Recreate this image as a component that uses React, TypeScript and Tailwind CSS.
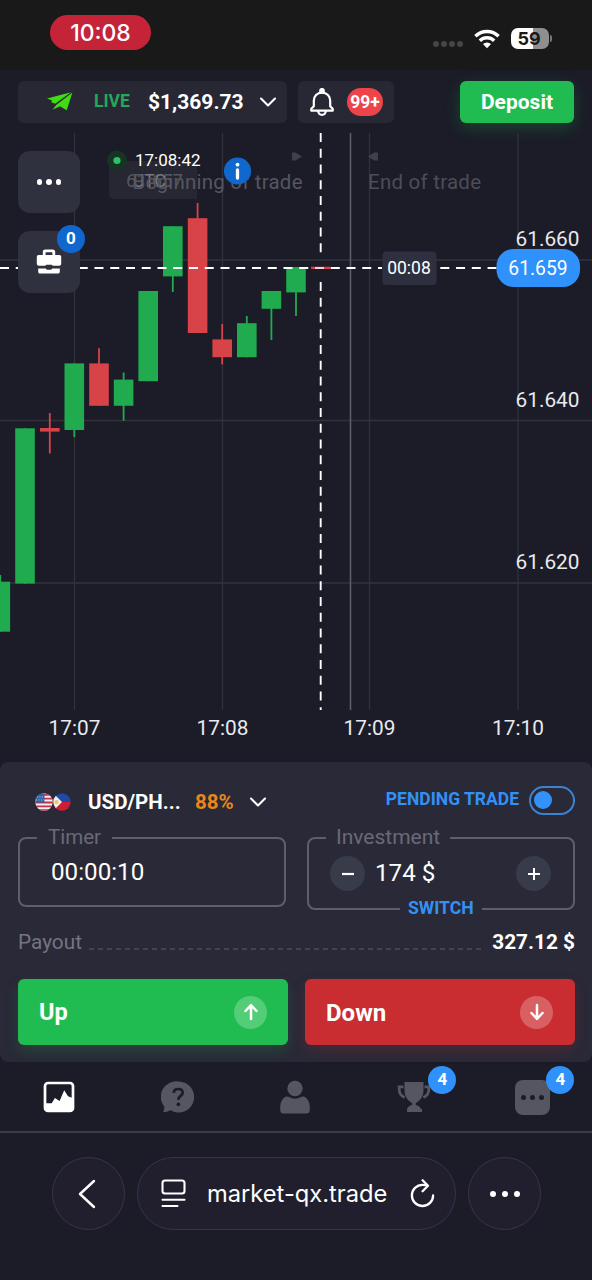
import React, { useState } from 'react';

type Candle = { x: number; top: number; bottom: number; high?: number; low?: number; up: boolean };

// x is the centre of the candle, all values are in page coordinates
const CANDLES: Candle[] = [
    { x: 0.3, top: 581.7, bottom: 631.7, high: 575, up: true },
    { x: 25, top: 428.3, bottom: 583.6, up: true },
    { x: 49.8, top: 428, bottom: 431.6, high: 413, low: 453.5, up: false },
    { x: 74.3, top: 363.4, bottom: 430, low: 437, up: true },
    { x: 99, top: 363.4, bottom: 405.8, high: 348.2, up: false },
    { x: 123.6, top: 379.6, bottom: 405.8, high: 372.5, low: 420.7, up: true },
    { x: 148.2, top: 291, bottom: 381.2, up: true },
    { x: 172.8, top: 226.2, bottom: 276.4, low: 292, up: true },
    { x: 197.6, top: 218.2, bottom: 333, high: 203, up: false },
    { x: 222.2, top: 339.4, bottom: 357.2, high: 324, low: 364.4, up: false },
    { x: 246.8, top: 323.2, bottom: 357.2, high: 316, up: true },
    { x: 271.4, top: 291, bottom: 308.8, low: 340, up: true },
    { x: 296, top: 267, bottom: 292.4, low: 316, up: true },
    { x: 321, top: 267, bottom: 269, up: false },
];

const GRID_X = [74.5, 222.5, 369.5, 518];
const GRID_Y = [260, 420.5, 583];

const TIMES = [
    { x: 74.5, label: '17:07' },
    { x: 222.5, label: '17:08' },
    { x: 369.5, label: '17:09' },
    { x: 518, label: '17:10' },
];

const PRICES = [
    { y: 246, label: '61.660' },
    { y: 406.5, label: '61.640' },
    { y: 569, label: '61.620' },
];

const Chevron: React.FC = () => (
    <svg width="18" height="12" viewBox="0 0 18 12" fill="none" stroke="#fff" strokeWidth="2.1" strokeLinecap="round" strokeLinejoin="round">
        <path d="M2 2.5l7 7 7-7" />
    </svg>
);

const StatusBar: React.FC = () => (
    <div className="flex h-[70px] items-start justify-between bg-[#191919] pl-[50px] pr-[40px]">
        <div className="mt-[15px] flex h-[35px] w-[101px] items-center justify-center rounded-full bg-[#c42338] pt-[2px] font-[Inter] text-[23px] font-medium text-white">
            10:08
        </div>
        <div className="mt-[27px] flex h-[22px] items-center">
            <div className="mt-3 flex gap-[2px]">
                <span className="size-[6px] rounded-full bg-[#454545]" />
                <span className="size-[6px] rounded-full bg-[#454545]" />
                <span className="size-[6px] rounded-full bg-[#454545]" />
                <span className="size-[6px] rounded-full bg-[#454545]" />
            </div>
            <svg className="ml-[11px] mt-[1px]" width="26" height="20" viewBox="0 0 26 20" fill="none" stroke="#fff" strokeWidth="3.4">
                <path d="M1.4 7.2a16.6 16.6 0 0 1 23.2 0" />
                <path d="M5.8 11.7a10.3 10.3 0 0 1 14.4 0" />
                <path d="M13 19.2l-4-4.1a5.7 5.7 0 0 1 8 0z" fill="#fff" stroke="none" />
            </svg>
            <div className="ml-[11px] flex h-[21px] w-[38px] items-center justify-center rounded-[7px] bg-[linear-gradient(90deg,#fff_58%,#8f8f8f_58%)] pr-[2px] pt-[1px] font-[Inter] text-[18px] font-bold text-[#191919]">
                59
            </div>
            <span className="ml-[1px] h-[7px] w-[2px] rounded-r-full bg-[#777]" />
        </div>
    </div>
);

const Header: React.FC = () => (
    <div className="flex h-[63px] items-start pl-[18px] pr-[18px] pt-[11px]">
        <div className="flex h-[42px] w-[269px] items-center rounded-md bg-[#272834] pl-[29px]">
            <svg className="mb-[2px]" width="26" height="19" viewBox="0 0 26 19" fill="#3fdc12">
                <path d="M0 6.4L24 .2 8.200 11.800 4.200 10.200 5 8.500z" />
                <path d="M25.400.400L19.700 18.300 13 14.200 5.600 17.800 9.200 12.900z" />
            </svg>
            <span className="mb-[2px] ml-[21px] w-[54px] whitespace-nowrap text-[17.5px] font-bold text-[#24a85a]">LIVE</span>
            <span className="mt-[2px] w-[111px] whitespace-nowrap text-[21px] font-bold text-white">$1,369.73</span>
            <Chevron />
        </div>
        <div className="ml-[11px] flex h-[42px] w-[96px] items-center rounded-md bg-[#272834] pl-3">
            <svg width="24" height="29" viewBox="0 0 24 29" fill="none" stroke="#fff" strokeWidth="2.2" strokeLinejoin="round">
                <circle cx="12" cy="2.8" r="1.8" fill="#fff" />
                <path d="M12 4.6c-5 0-8.2 3.6-8.2 8.2v5.4L1.3 20.8v1.9h21.4v-1.9l-2.5-2.6v-5.4c0-4.6-3.2-8.2-8.2-8.2z" />
                <path d="M8 22.9c.5 2.6 1.8 4 4 4s3.500-1.400 4-4" />
            </svg>
            <span className="ml-[13px] flex h-7 w-[36px] items-center justify-center rounded-full bg-[#ec4448] text-[17.5px] font-bold text-white">
                99+
            </span>
        </div>
        <button className="ml-auto flex h-[42px] w-[114px] items-center justify-center rounded-md bg-[#20bc52] pt-[2px] text-[21px] font-bold text-white shadow-[0_5px_16px_rgba(32,188,82,0.25)]">
            Deposit
        </button>
    </div>
);

const Chart: React.FC = () => (
    <div className="relative h-[629px]">
        <svg className="absolute inset-0" width="592" height="629" viewBox="0 133 592 629">
            <g stroke="#31323c" strokeWidth="1.3">
                {GRID_X.map(x => <line key={x} x1={x} x2={x} y1="133" y2="710" />)}
                {GRID_Y.map(y => <line key={y} x1="0" x2="592" y1={y} y2={y} />)}
            </g>
            <line x1="350.5" x2="350.5" y1="133" y2="710" stroke="#5c5d66" strokeWidth="1.6" />

            {CANDLES.map(c => (
                <g key={c.x} fill={c.up ? '#20ab4f' : '#d84347'}>
                    <rect x={c.x - 0.9} y={c.high ?? c.top} width="1.8" height={(c.low ?? c.bottom) - (c.high ?? c.top)} />
                    <rect x={c.x - 9.8} y={c.top} width="19.6" height={c.bottom - c.top} />
                </g>
            ))}

            {/* Last used price tag fading out under the trade labels */}
            <path d="M109 161h88v38h-82q-6 0-6-6z" fill="#262732" />
            <g fontSize="20.5">
                <text x="126" y="187" fill="#55565f" fontSize="18.5">61.657</text>
                <text x="133" y="187" fill="#777881" fontSize="17.5">UTC</text>
                <text x="132.5" y="189" fill="#555660" textLength="170">Beginning of trade</text>
                <text x="368" y="189" fill="#4c4d56" textLength="113">End of trade</text>
            </g>
            <path d="M292 152.5h3.5l6.5 4-6.5 4h-3.5z" fill="#3f404a" />
            <path d="M378 152.5h-4l-6 4 6 4h4z" fill="#3f404a" />

            <g stroke="#fff" strokeWidth="1.9" strokeDasharray="9 6.75">
                <line x1="320.7" x2="320.7" y1="133" y2="253" />
                <line x1="320.7" x2="320.7" y1="282" y2="710" />
                <line x1="0" x2="382" y1="268" y2="268" />
                <line x1="440.3" x2="497" y1="268" y2="268" />
            </g>
            <line x1="311" x2="331" y1="267.5" y2="267.5" stroke="#d84347" strokeWidth="1.5" />
            <line x1="315" x2="324" y1="267.8" y2="267.8" stroke="#f0d5d8" strokeWidth="1.5" />

            <rect x="382.5" y="251.5" width="54" height="33.500" rx="4" fill="#2f303f" />
            <text x="409" y="274" fill="#fff" fontSize="17.500" textAnchor="middle">00:08</text>
            <rect x="496.5" y="249" width="83.5" height="38" rx="17" fill="#2f91fc" />
            <text x="538" y="274.5" fill="#fff" fontSize="19.300" textAnchor="middle">61.659</text>

            <g fill="#e9eaef" fontSize="20.8">
                {PRICES.map(p => <text key={p.label} x="579.5" y={p.y} textAnchor="end">{p.label}</text>)}
                {TIMES.map(t => <text key={t.label} x={t.x} y="735" textAnchor="middle">{t.label}</text>)}
            </g>

            <circle cx="117" cy="160.5" r="10" fill="#173326" />
            <circle cx="117" cy="160.5" r="3.6" fill="#2cc163" />
            <text x="135" y="166" fill="#fff" fontSize="17">17:08:42</text>
            <circle cx="237.5" cy="171" r="13.6" fill="#1067cd" />
            <circle cx="237.5" cy="164.7" r="1.9" fill="#fff" />
            <path d="M237.500 170v8" stroke="#fff" strokeWidth="3.3" strokeLinecap="round" />
        </svg>

        <div className="relative ml-[18px] flex w-[62px] flex-col gap-[18px] pt-[18px]">
            <button className="flex h-[62px] items-center justify-center gap-1 rounded-xl bg-[#30313f]">
                <span className="size-[5.5px] rounded-full bg-white" />
                <span className="size-[5.5px] rounded-full bg-white" />
                <span className="size-[5.5px] rounded-full bg-white" />
            </button>
            <button className="relative flex h-[62px] items-center justify-center rounded-xl bg-[#30313f]">
                <svg width="26" height="26" viewBox="0 0 26 26">
                    <path d="M8.200 6.500V3q0-1.200 1.200-1.200h7.200q1.200 0 1.200 1.200v3.500" fill="none" stroke="#fff" strokeWidth="2.8" />
                    <path d="M2.500 6h21q1.700 0 1.700 1.700v7q0 2-2 2h-6.700q0-1-1-1h-5q-1 0-1 1H2.800q-2 0-2-2v-7Q.800 6 2.500 6z" fill="#fff" />
                    <path d="M2.200 19.500h7.600q.4 1.300 1.700 1.300h3q1.300 0 1.700-1.300h7.600v3.200q0 1.900-1.900 1.900H4.100q-1.900 0-1.900-1.900z" fill="#fff" />
                </svg>
                <span className="absolute -right-[5px] -top-[6px] flex size-7 items-center justify-center rounded-full bg-[#1067cd] text-[17px] font-bold text-white">
                    0
                </span>
            </button>
        </div>
    </div>
);

const Flags: React.FC = () => (
    <svg width="36" height="18" viewBox="0 0 36 18">
        <defs>
            <clipPath id="us"><circle cx="9" cy="9" r="8.7" /></clipPath>
            <clipPath id="ph"><circle cx="27" cy="9" r="8.7" /></clipPath>
        </defs>
        <g clipPath="url(#us)">
            <rect width="18" height="18" fill="#f2eef2" />
            <path d="M0 1.700h18M0 5.600h18M0 9.500h18M0 13.400h18M0 17.200h18" stroke="#c9304a" strokeWidth="1.9" />
            <rect width="9.5" height="9.5" fill="#3163a8" />
            <path d="M2 4h7M1 7h8" stroke="#b9cfe8" strokeDasharray="1 1.5" />
        </g>
        <g clipPath="url(#ph)">
            <rect x="18" width="18" height="9" fill="#1d4ba3" />
            <rect x="18" y="9" width="18" height="9" fill="#cc1e35" />
            <path d="M18 0l9 9-9 9z" fill="#f3efe9" />
            <circle cx="21.5" cy="9" r="2" fill="#f0c55c" />
        </g>
    </svg>
);

const TradePanel: React.FC = () => {
    const [amount, setAmount] = useState(174);

    return (
        <div className="h-[300px] rounded-lg bg-[#292937] pl-[18px] pr-[17px]">
            <div className="flex h-[75px] items-center">
                <div className="ml-[17px] mt-[5px] flex items-center">
                    <Flags />
                    <span className="ml-[17px] w-[107px] whitespace-nowrap text-[20.5px] font-bold text-white">USD/PH...</span>
                    <span className="w-[54px] text-[20.5px] font-bold text-[#e8861c]">88%</span>
                    <Chevron />
                </div>
                <div className="ml-auto flex items-center gap-[10px]">
                    <span className="whitespace-nowrap text-[17.5px] font-bold text-[#3391f5]">PENDING TRADE</span>
                    <span className="mt-[1px] flex h-[29px] w-[46px] items-center rounded-full border-2 border-[#3b82cf] pl-[3px]">
                        <span className="size-[18px] rounded-full bg-[#3391f8]" />
                    </span>
                </div>
            </div>

            <div className="flex h-[74px] items-start justify-between">
                <div className="relative flex h-[70px] w-[268px] items-center rounded-lg border-2 border-[#5e5f6b] pl-[31px]">
                    <span className="absolute left-[17px] top-[-16px] bg-[#292937] px-[11px] text-[20.5px] leading-7 text-[#696a77]">Timer</span>
                    <span className="text-[24.2px] text-white">00:00:10</span>
                </div>
                <div className="relative flex h-[73px] w-[268px] items-center rounded-lg border-2 border-[#5e5f6b] pl-[21px] pr-[22px]">
                    <span className="absolute left-[17px] top-[-16px] bg-[#292937] px-[10px] text-[21px] leading-7 text-[#696a77]">Investment</span>
                    <button onClick={() => setAmount(amount - 1)} className="flex size-[35px] items-center justify-center rounded-full bg-[#383b49]">
                        <svg width="16" height="16" viewBox="0 0 16 16" stroke="#fff" strokeWidth="2.2"><path d="M2 8h12" /></svg>
                    </button>
                    <span className="ml-[10px] text-[24.2px] text-white">{amount} $</span>
                    <button onClick={() => setAmount(amount + 1)} className="ml-auto flex size-[35px] items-center justify-center rounded-full bg-[#383b49]">
                        <svg width="16" height="16" viewBox="0 0 16 16" stroke="#fff" strokeWidth="2"><path d="M2 8h12M8 2v12" /></svg>
                    </button>
                    <span className="absolute bottom-[-12px] left-[91px] bg-[#292937] px-2 text-[17.6px] font-bold leading-6 text-[#3391f5]">SWITCH</span>
                </div>
            </div>

            <div className="flex h-[68px] items-center">
                <span className="mb-[5px] text-[20.8px] text-[#747581]">Payout</span>
                <svg className="ml-[7px] mt-[8px] flex-1" height="2"><path d="M0 1h400" stroke="#4b4c58" strokeWidth="1.3" strokeDasharray="5 4" /></svg>
                <span className="mb-[5px] ml-[7px] text-[20.8px] font-bold text-white">327.12 $</span>
            </div>

            <div className="flex justify-between">
                <button className="flex h-[66px] w-[270px] items-center justify-between rounded-md bg-[#20bc52] pl-[21px] pr-[21px] text-[23.5px] font-bold text-white shadow-[0_6px_14px_rgba(32,188,82,0.18)]">
                    <span className="mt-[2px]">Up</span>
                    <span className="flex size-[33px] items-center justify-center rounded-full bg-[#54cd79]">
                        <svg width="18" height="18" viewBox="0 0 18 18" fill="none" stroke="#fff" strokeWidth="2.5" strokeLinecap="round" strokeLinejoin="round"><path d="M9 16V2.500M3.500 8L9 2.200 14.500 8" /></svg>
                    </span>
                </button>
                <button className="flex h-[66px] w-[270px] items-center justify-between rounded-md bg-[#c92d31] pl-[21px] pr-[22px] text-[24px] font-bold text-white shadow-[0_6px_14px_rgba(201,45,49,0.18)]">
                    <span className="mt-[2px]">Down</span>
                    <span className="flex size-[33px] items-center justify-center rounded-full bg-[#d86063]">
                        <svg width="18" height="18" viewBox="0 0 18 18" fill="none" stroke="#fff" strokeWidth="2.5" strokeLinecap="round" strokeLinejoin="round"><path d="M9 2v13.500M3.500 10L9 15.800 14.500 10" /></svg>
                    </span>
                </button>
            </div>
        </div>
    );
};

const NavBar: React.FC = () => (
    <div className="grid h-[71px] grid-cols-5 place-items-center border-b-2 border-[#3a3b46] pt-[1px]">
        <svg width="32" height="32" viewBox="0 0 32 32">
            <rect x="2" y="2" width="28" height="28" rx="3" fill="none" stroke="#fff" strokeWidth="2.7" />
            <path d="M2 22.300h6.700l3.200-5.200 4.700 2.800 4.600-10.700 3.800 6 4.500 1.700V30H2z" fill="#fff" />
        </svg>
        <svg width="34" height="34" viewBox="0 0 34 34">
            <path d="M17.500 1.500a15.500 15.500 0 1 1-8 28.700c-2.300 1.300-5 1.900-7.500 2 1-1.500 1.500-3.500 1.300-5.500A15.500 15.500 0 0 1 17.500 1.500z" fill="#555661" />
            <path d="M12.800 13c0-2.700 1.900-4 4.400-4s4.500 1.300 4.500 3.800c0 3-4.300 3.200-4.300 6.400v.8" fill="none" stroke="#1b1c27" strokeWidth="2.7" />
            <circle cx="17.400" cy="24.300" r="1.9" fill="#1b1c27" />
        </svg>
        <svg width="32" height="36" viewBox="0 0 32 36" fill="#555661">
            <circle cx="15" cy="9.5" r="7.7" />
            <path d="M5.500 17.800q1.500-.8 3 0 6.500 3.700 13 0 1.500-.8 3 0 5.300 3.200 5.300 10.700v2.500q0 3.500-3.500 3.500H3.700Q.200 34.500.200 31v-2.500q0-7.500 5.300-10.700z" />
        </svg>
        <div className="relative">
            <svg width="34" height="32" viewBox="0 0 34 32">
                <path d="M6.500 5.800H2.200v2.600c0 4 1.600 6.200 5.400 8M27.500 5.800h4.300v2.600c0 4-1.600 6.200-5.400 8" fill="none" stroke="#555661" strokeWidth="2.8" />
                <path d="M7.500 1h19v8.500c0 6-3.500 10.500-7.700 12.500v2q4.200.800 5 4H25v3H10v-3h.200q.8-3.200 5-4v-2c-4.200-2-7.700-6.500-7.700-12.500z" fill="#555661" />
            </svg>
            <span className="absolute -right-[25px] -top-[15px] flex size-7 items-center justify-center rounded-full bg-[#3091fb] text-[17px] font-bold text-white">4</span>
        </div>
        <div className="relative flex size-[35px] items-center justify-center gap-1 rounded-lg bg-[#555661]">
            <span className="size-[5px] rounded-full bg-[#1b1c27]" />
            <span className="size-[5px] rounded-full bg-[#1b1c27]" />
            <span className="size-[5px] rounded-full bg-[#1b1c27]" />
            <span className="absolute -right-6 -top-[14px] flex size-7 items-center justify-center rounded-full bg-[#3091fb] text-[17px] font-bold text-white">4</span>
        </div>
    </div>
);

const BrowserBar: React.FC = () => (
    <div className="flex h-[147px] items-start gap-3 pl-[52px] pt-6">
        <button className="flex size-[73px] items-center justify-center rounded-full border border-[#37344b] bg-[#211f2e]">
            <svg className="mr-1" width="20" height="30" viewBox="0 0 20 30" fill="none" stroke="#fff" strokeWidth="2.4" strokeLinecap="round" strokeLinejoin="round"><path d="M17 2L3 15l14 13" /></svg>
        </button>
        <div className="flex h-[73px] w-[319px] items-center rounded-full border border-[#37344b] bg-[#211f2e] pl-[23px]">
            <svg width="25" height="29" viewBox="0 0 25 29" fill="none" stroke="#fff" strokeWidth="2.1" strokeLinecap="round">
                <rect x="1.5" y="1.5" width="22" height="13" rx="2.5" />
                <path d="M1.500 20.700h22M1.500 27h15" />
            </svg>
            <span className="ml-[21px] w-[203px] whitespace-nowrap font-[Inter] text-[23.7px] text-white">market-qx.trade</span>
            <svg width="25" height="30" viewBox="0 0 25 30" fill="none" stroke="#fff" strokeWidth="2.3" strokeLinecap="round" strokeLinejoin="round">
                <path d="M17.800 6.800Q15.500 5.800 12.500 5.800A10.600 10.600 0 1 0 23.100 16.400M12.600 1.300l5.400 5.500-5.400 5.400" />
            </svg>
        </div>
        <button className="flex size-[73px] items-center justify-center gap-[6px] rounded-full border border-[#37344b] bg-[#211f2e]">
            <span className="size-[6px] rounded-full bg-white" />
            <span className="size-[6px] rounded-full bg-white" />
            <span className="size-[6px] rounded-full bg-white" />
        </button>
    </div>
);

const App: React.FC = () => (
    <div className="h-[1280px] w-[592px] overflow-hidden bg-[#1b1c27] font-[Roboto,sans-serif]">
        <StatusBar />
        <Header />
        <Chart />
        <TradePanel />
        <NavBar />
        <BrowserBar />
    </div>
);

export default App;
